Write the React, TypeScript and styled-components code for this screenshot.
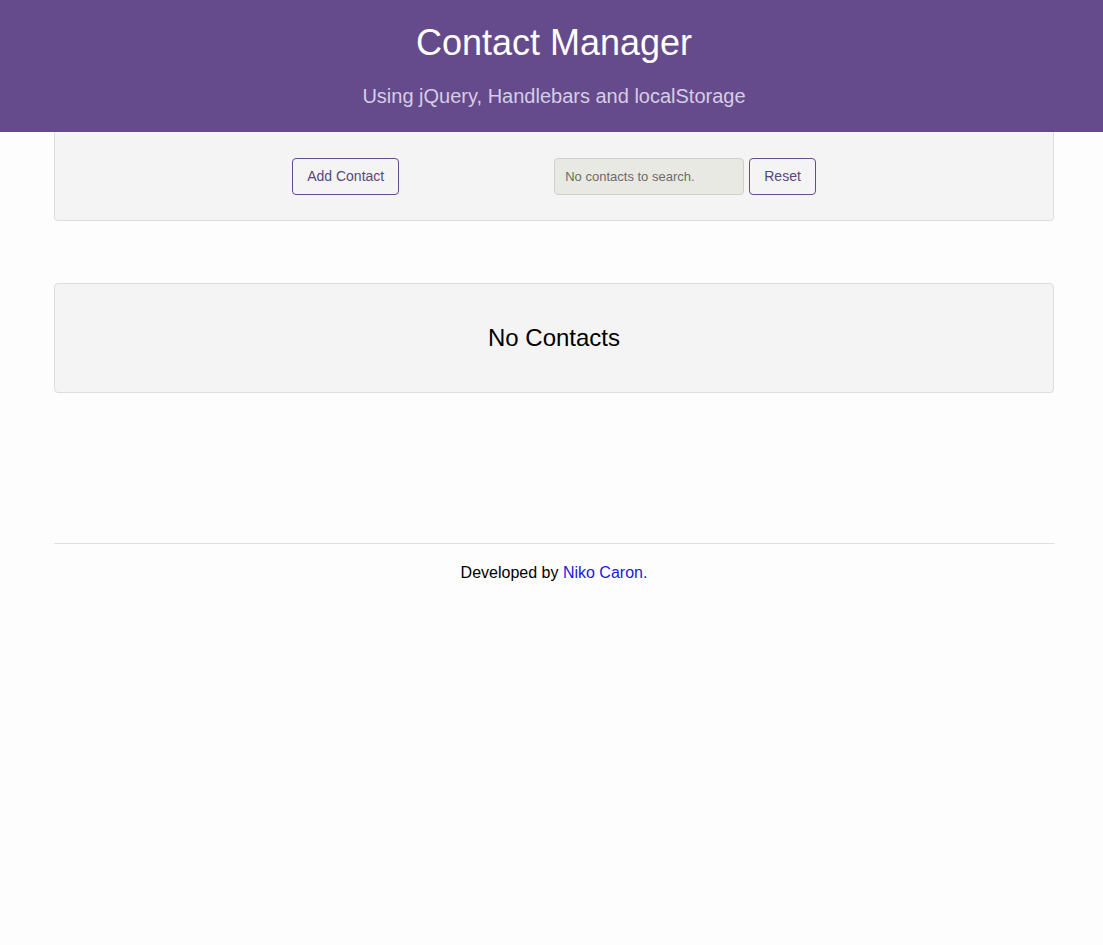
import styled, { createGlobalStyle } from "styled-components";

const GlobalStyle = createGlobalStyle`
  body {
    margin: 0;
    background: #fdfdfd;
    font-family: "Liberation Sans", Arial, sans-serif;
    color: #000;
  }
`;

const App = () => {
  return (
    <>
      <GlobalStyle />
      <Header>
        <Title>Contact Manager</Title>
        <Subtitle>Using jQuery, Handlebars and localStorage</Subtitle>
      </Header>
      <Page>
        <Main>
          <Toolbar>
            <Btn>Add Contact</Btn>
            <SearchGroup>
              <Search placeholder="No contacts to search." disabled />
              <Btn>Reset</Btn>
            </SearchGroup>
          </Toolbar>
          <EmptyPanel>No Contacts</EmptyPanel>
          <Footer>
            Developed by <FooterLink href="#">Niko Caron.</FooterLink>
          </Footer>
        </Main>
      </Page>
    </>
  );
};

const Header = styled.header`
  background: #654a8c;
  height: 132px;
  box-sizing: border-box;
  padding: 22px 0 0 5px;
  text-align: center;
`;

const Title = styled.h1`
  margin: 0;
  font-size: 36px;
  font-weight: normal;
  line-height: 42px;
  color: #fff;
`;

const Subtitle = styled.p`
  margin: 20px 0 0;
  font-size: 20px;
  line-height: 24px;
  color: #d6cde6;
`;

const Page = styled.div`
  padding-left: 5px;
`;

const Main = styled.main`
  width: 1000px;
  margin: 0 auto;
`;

const Toolbar = styled.div`
  display: flex;
  justify-content: center;
  align-items: center;
  gap: 155px;
  height: 88px;
  background: #f4f4f4;
  border: 1px solid #dedede;
  border-top: none;
  border-radius: 0 0 4px 4px;
`;

const SearchGroup = styled.div`
  display: flex;
  gap: 5px;
`;

const Btn = styled.button`
  height: 37px;
  padding: 0 14px;
  background: transparent;
  border: 1px solid #654a8c;
  border-radius: 4px;
  color: #57487a;
  font-family: "Liberation Sans", Arial, sans-serif;
  font-size: 14px;
  cursor: pointer;
`;

const Search = styled.input`
  width: 190px;
  height: 37px;
  box-sizing: border-box;
  padding: 0 10px;
  background: #e9e9e3;
  border: 1px solid #cfcfcf;
  border-radius: 4px;
  font-family: "Liberation Sans", Arial, sans-serif;
  font-size: 13px;

  &::placeholder {
    color: #6f6a6a;
  }
`;

const EmptyPanel = styled.div`
  margin-top: 62px;
  height: 108px;
  display: flex;
  align-items: center;
  justify-content: center;
  background: #f4f4f4;
  border: 1px solid #dedede;
  border-radius: 4px;
  font-size: 24px;
`;

const Footer = styled.footer`
  margin-top: 150px;
  border-top: 1px solid #dedede;
  padding-top: 20px;
  text-align: center;
  font-size: 16px;
`;

const FooterLink = styled.a`
  color: #1a1adc;
  text-decoration: none;
`;

export default App;
